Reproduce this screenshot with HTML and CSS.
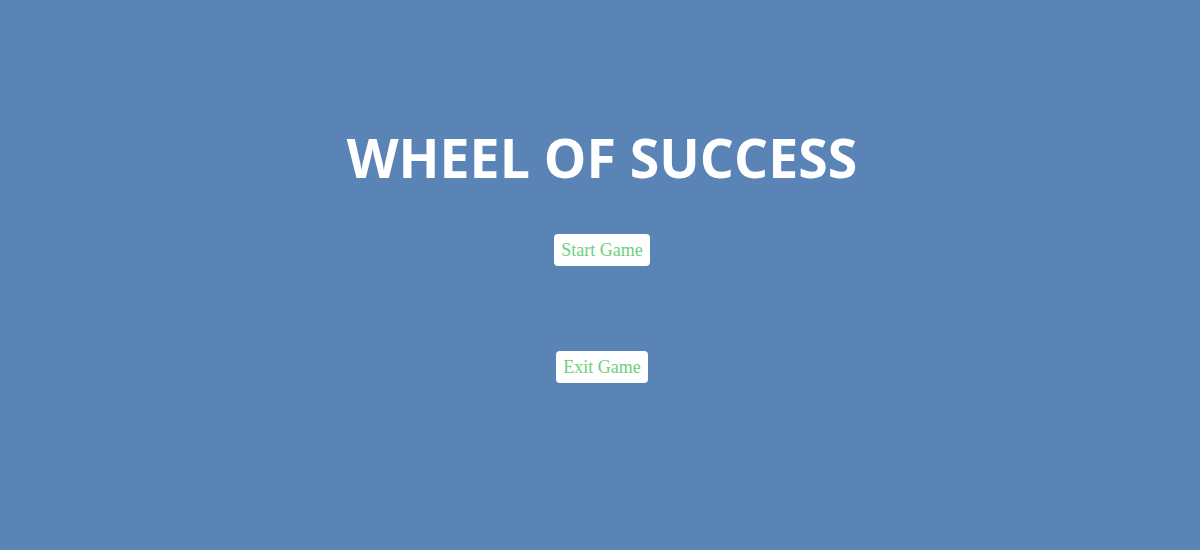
FILE: index.html
```html
<!DOCTYPE html>
<html lang="en">
<head>
<meta charset="utf-8">
<title>Wheel of Success</title>
<link rel="stylesheet" href="styles.css">
</head>
<body>
  <main class="menu">
    <h1 class="menu-title">WHEEL OF SUCCESS</h1>
    <div class="menu-actions">
      <button class="menu-btn" type="button">Start Game</button>
      <button class="menu-btn" type="button">Exit Game</button>
    </div>
  </main>
</body>
</html>
```
FILE: styles.css
```css
html, body {
  margin: 0;
  padding: 0;
  height: 100%;
}

body {
  background: #5b84b6;
  font-family: "Liberation Serif", "Times New Roman", serif;
}

.menu {
  display: flex;
  flex-direction: column;
  align-items: center;
  padding: 123px 0 0 4px;
}

.menu-title {
  margin: 0;
  font-family: "Open Sans", sans-serif;
  font-weight: 700;
  font-size: 53.6px;
  line-height: 70px;
  color: #ffffff;
}

.menu-actions {
  display: flex;
  flex-direction: column;
  align-items: center;
  gap: 85px;
  margin-top: 41px;
}

.menu-btn {
  background: #ffffff;
  color: #6fcf7d;
  border: none;
  border-radius: 4px;
  font-family: "Liberation Serif", "Times New Roman", serif;
  font-size: 18px;
  line-height: 20px;
  padding: 6px 7px;
  cursor: pointer;
}
```
